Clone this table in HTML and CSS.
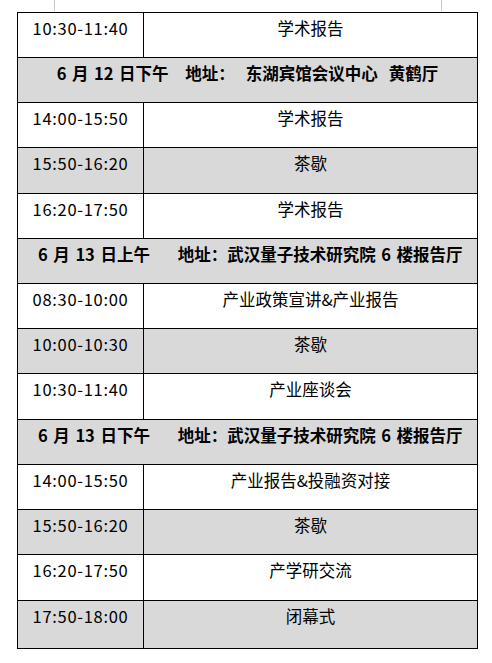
FILE: index.html
```html
<!DOCTYPE html>
<html lang="zh-CN">
<head>
<meta charset="utf-8">
<title>日程</title>
<link rel="stylesheet" href="styles.css">
</head>
<body>
<div class="page">
  <div class="marks"><span class="mark"></span><span class="mark"></span></div>
  <div class="schedule">
    <div class="cell time">10:30-11:40</div><div class="cell item">学术报告</div>
    <div class="cell head shade">6 月 12 日下午   地址：  东湖宾馆会议中心  黄鹤厅</div>
    <div class="cell time">14:00-15:50</div><div class="cell item">学术报告</div>
    <div class="cell time shade">15:50-16:20</div><div class="cell item shade">茶歇</div>
    <div class="cell time">16:20-17:50</div><div class="cell item">学术报告</div>
    <div class="cell head shade"> 6 月 13 日上午     地址：武汉量子技术研究院 6 楼报告厅</div>
    <div class="cell time">08:30-10:00</div><div class="cell item">产业政策宣讲&amp;产业报告</div>
    <div class="cell time shade">10:00-10:30</div><div class="cell item shade">茶歇</div>
    <div class="cell time">10:30-11:40</div><div class="cell item">产业座谈会</div>
    <div class="cell head shade"> 6 月 13 日下午     地址：武汉量子技术研究院 6 楼报告厅</div>
    <div class="cell time">14:00-15:50</div><div class="cell item">产业报告&amp;投融资对接</div>
    <div class="cell time shade">15:50-16:20</div><div class="cell item shade">茶歇</div>
    <div class="cell time">16:20-17:50</div><div class="cell item">产学研交流</div>
    <div class="cell time shade">17:50-18:00</div><div class="cell item shade">闭幕式</div>
  </div>
</div>
</body>
</html>
```
FILE: styles.css
```css
* { box-sizing: border-box; }
html, body { margin: 0; padding: 0; background: #fff; }
body {
  font-family: "Noto Sans CJK SC", "Noto Sans", sans-serif;
  font-size: 16.5px;
  color: #000;
}
.page {
  width: 492px;
  height: 663px;
  padding-left: 17px;
}
.marks {
  height: 12px;
  display: flex;
  justify-content: space-between;
  padding: 0 50px 0 37px;
}
.mark {
  width: 1px;
  height: 11px;
  background: #c9c9c9;
}
.schedule {
  width: 461px;
  display: grid;
  grid-template-columns: 126px 334px;
  grid-template-rows: 45px 45px 45px 46px 45px 45px 45px 45px 46px 45px 45px 45px 46px 48px;
  border-left: 1px solid #000;
  border-top: 1px solid #000;
}
.cell {
  border-right: 1px solid #000;
  border-bottom: 1px solid #000;
  text-align: center;
  line-height: 22px;
  padding-top: 4px;
  white-space: pre;
}
.time { letter-spacing: 0.7px; }
.head {
  grid-column: 1 / -1;
  font-weight: bold;
  word-spacing: 1.8px;
}
.shade { background: #d9d9d9; }
```
